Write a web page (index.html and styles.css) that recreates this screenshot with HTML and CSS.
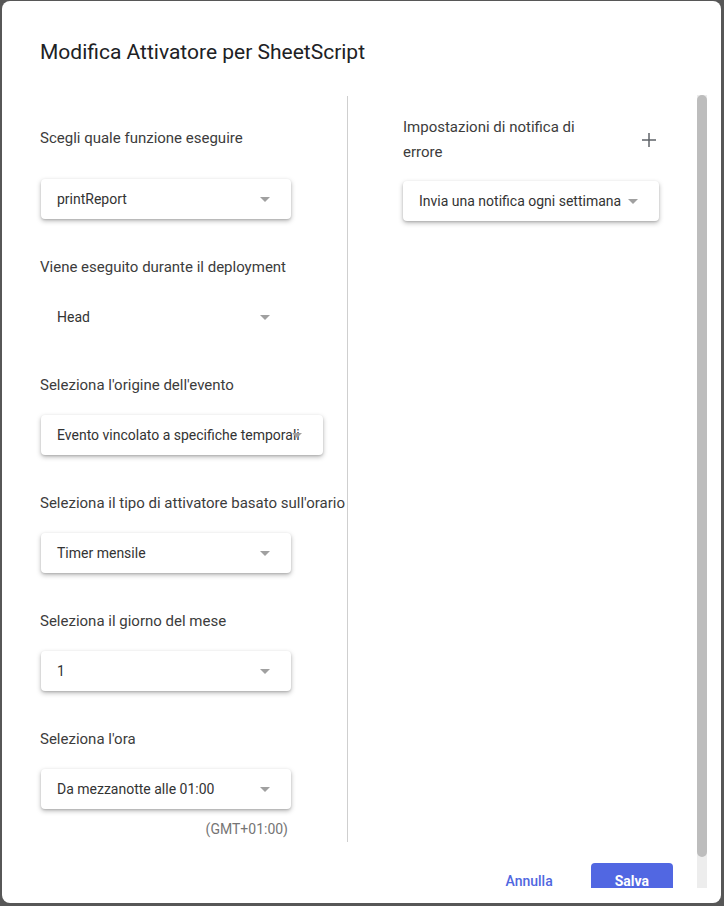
FILE: index.html
```html
<!DOCTYPE html>
<html lang="it">
<head>
    <meta charset="UTF-8">
    <meta name="viewport" content="width=device-width, initial-scale=1.0">
    <title>Modifica Attivatore per SheetScript</title>
    <link rel="stylesheet" href="styles.css">
</head>
<body>

    <div class="dialog">
        <h1 class="dialog-title">Modifica Attivatore per SheetScript</h1>

        <div class="dialog-main">
            <div class="dialog-body">
                <div class="columns">

                    <!-- Trigger settings -->
                    <div class="col-left">
                        <div class="field field-first">
                            <div class="field-label">Scegli quale funzione eseguire</div>
                            <div class="select">printReport<span class="select-arrow"></span></div>
                        </div>
                        <div class="field">
                            <div class="field-label">Viene eseguito durante il deployment</div>
                            <div class="select select-flat">Head<span class="select-arrow"></span></div>
                        </div>
                        <div class="field">
                            <div class="field-label">Seleziona l'origine dell'evento</div>
                            <div class="select select-wide">Evento vincolato a specifiche temporali<span class="select-arrow"></span></div>
                        </div>
                        <div class="field">
                            <div class="field-label">Seleziona il tipo di attivatore basato sull'orario</div>
                            <div class="select">Timer mensile<span class="select-arrow"></span></div>
                        </div>
                        <div class="field">
                            <div class="field-label">Seleziona il giorno del mese</div>
                            <div class="select">1<span class="select-arrow"></span></div>
                        </div>
                        <div class="field">
                            <div class="field-label">Seleziona l'ora</div>
                            <div class="select">Da mezzanotte alle 01:00<span class="select-arrow"></span></div>
                            <div class="timezone">(GMT+01:00)</div>
                        </div>
                    </div>

                    <!-- Failure notifications -->
                    <div class="col-right">
                        <div class="notify-head">
                            <div class="notify-label">Impostazioni di notifica di errore</div>
                            <button class="icon-btn" type="button">
                                <svg width="24" height="24" viewBox="0 0 24 24">
                                    <path d="M12 5v14M5 12h14" stroke="#5f6368" stroke-width="1.5" fill="none"/>
                                </svg>
                            </button>
                        </div>
                        <div class="select select-notify">Invia una notifica ogni settimana<span class="select-arrow"></span></div>
                    </div>

                </div>

                <div class="dialog-actions">
                    <button class="btn btn-text" type="button">Annulla</button>
                    <button class="btn btn-primary" type="button">Salva</button>
                </div>
            </div>

            <!-- scroll track for the body -->
            <div class="scrollbar">
                <div class="scrollbar-thumb"></div>
            </div>
        </div>
    </div>

</body>
</html>
```

FILE: styles.css
```css
body {
    margin: 0;
    background: #575757;
    font-family: 'Roboto', 'Liberation Sans', sans-serif;
    color: #333;
}

.dialog {
    margin: 1px 3px 3px 2px;
    height: 902px;
    box-sizing: border-box;
    background: white;
    border-radius: 8px;
    overflow: hidden;
}

.dialog-title {
    margin: 0;
    padding: 37px 38px 29px;
    font-size: 21px;
    line-height: 28px;
    font-weight: 400;
    color: #202124;
}

.dialog-main {
    display: flex;
    height: 793px;
    margin-right: 14px;
}

.dialog-body {
    flex: 1;
    overflow: hidden;
}

.scrollbar {
    width: 10px;
    flex-shrink: 0;
    background: #ededed;
}

.scrollbar-thumb {
    height: 762px;
    background: #bdbdbd;
    border-radius: 5px;
}

.columns {
    display: flex;
    padding-left: 38px;
    margin-top: 1px;
}

.col-left {
    width: 307px;
    padding: 32px 0 3px;
    border-right: 1px solid #cfcfcf;
}

.col-right {
    padding: 19px 0 0 55px;
}

.field {
    margin-top: 38px;
}

.field-first {
    margin-top: 0;
}

.field-label {
    font-size: 15px;
    line-height: 20px;
    color: #3c3c3c;
    white-space: nowrap;
    margin-bottom: 20px;
}

.field-first .field-label {
    margin-bottom: 31px;
}

.select {
    position: relative;
    width: 250px;
    height: 40px;
    margin-left: 1px;
    padding: 0 16px;
    box-sizing: border-box;
    line-height: 40px;
    font-size: 14px;
    color: #333;
    white-space: nowrap;
    background: white;
    border-radius: 4px;
    box-shadow: 0 2px 5px rgba(0, 0, 0, 0.28), 0 1px 2px rgba(0, 0, 0, 0.12);
}

.select-flat {
    box-shadow: none;
}

.select-wide {
    width: 282px;
}

.select-notify {
    width: 256px;
    margin-left: 0;
}

.select-arrow {
    position: absolute;
    right: 21px;
    top: 18px;
    width: 0;
    height: 0;
    border-left: 5.5px solid transparent;
    border-right: 5.5px solid transparent;
    border-top: 5px solid #a0a0a0;
}

.timezone {
    width: 248px;
    margin-top: 10px;
    text-align: right;
    font-size: 14px;
    line-height: 20px;
    color: #757575;
}

.notify-head {
    display: flex;
    justify-content: space-between;
    align-items: center;
    width: 258px;
    margin-bottom: 16px;
}

.notify-label {
    width: 200px;
    font-size: 15px;
    line-height: 25px;
    color: #3c3c3c;
}

.icon-btn {
    width: 24px;
    height: 24px;
    padding: 0;
    border: none;
    background: none;
    cursor: pointer;
}

.dialog-actions {
    display: flex;
    justify-content: flex-end;
    gap: 14px;
    padding: 21px 24px 24px 0;
}

.btn {
    height: 36px;
    padding: 0 24px;
    border: none;
    border-radius: 4px;
    font-family: inherit;
    font-size: 14px;
    cursor: pointer;
}

.btn-text {
    background: none;
    color: #5067e0;
    font-weight: 500;
}

.btn-primary {
    background: #5167e2;
    color: white;
    font-weight: 700;
}
```
